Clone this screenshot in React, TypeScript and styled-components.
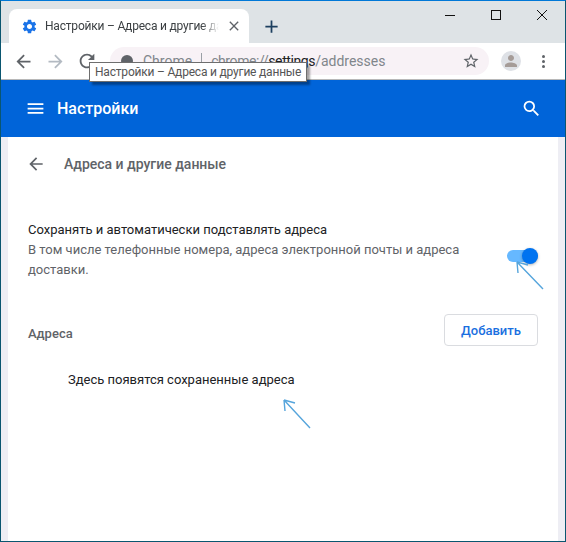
import styled, { createGlobalStyle } from 'styled-components'
import { MdAdd, MdArrowBack, MdArrowForward, MdClose, MdMenu, MdPerson, MdRefresh, MdSearch, MdSettings, MdStarBorder } from 'react-icons/md'

const Global = createGlobalStyle`
  html, body { margin: 0; padding: 0; background: #fff; }
  body { font-family: Roboto, "Liberation Sans", sans-serif; }
`

const Win = styled.div`
  position: relative;
  box-sizing: border-box;
  width: 566px;
  height: 542px;
  display: flex;
  flex-direction: column;
  overflow: hidden;
  border: 1px solid #0a5670;
  border-top-color: #0078d7;
`

const TabStrip = styled.div`
  height: 42px;
  flex: none;
  display: flex;
  align-items: flex-end;
  padding-left: 8px;
  background: #dee3e6;
`

const Tab = styled.div`
  box-sizing: border-box;
  width: 240px;
  height: 34px;
  display: flex;
  align-items: center;
  gap: 7px;
  padding: 0 7px 0 12px;
  background: #fff;
  border-radius: 8px 8px 0 0;
  color: #3c4043;
  font-size: 12px;
`

const TabTitle = styled.span`
  flex: 1;
  overflow: hidden;
  white-space: nowrap;
  letter-spacing: -0.2px;
  -webkit-mask-image: linear-gradient(90deg, #000 90%, transparent);
  mask-image: linear-gradient(90deg, #000 90%, transparent);
`

const NewTab = styled.div`
  width: 28px;
  height: 34px;
  margin-left: 8px;
  display: flex;
  align-items: center;
  justify-content: center;
  color: #1c3f5f;
`

const Controls = styled.div`
  margin-left: auto;
  align-self: flex-start;
  display: flex;
  color: #111;
`

const Control = styled.div`
  width: 46px;
  height: 28px;
  display: flex;
  align-items: center;
  justify-content: center;
`

const Toolbar = styled.div`
  box-sizing: border-box;
  height: 37px;
  flex: none;
  display: flex;
  align-items: center;
  padding-left: 6px;
  background: #fff;
  border-bottom: 1px solid #b8b8b8;
`

const NavBtn = styled.div<{ $dim?: boolean }>`
  width: 32px;
  height: 24px;
  display: flex;
  align-items: center;
  justify-content: center;
  color: ${p => (p.$dim ? '#b3bac2' : '#5f6368')};
`

const Omnibox = styled.div`
  box-sizing: border-box;
  width: 379px;
  height: 28px;
  margin-left: 7px;
  display: flex;
  align-items: center;
  padding: 0 9px 0 11px;
  background: #f8f2f6;
  border-radius: 14px;
  font-size: 14px;
  color: #80868b;
`

const SiteIcon = styled.span`
  width: 12px;
  height: 12px;
  margin-right: 10px;
  border-radius: 50%;
  background: #5f6368;
`

const Divider = styled.span`
  width: 1px;
  height: 16px;
  margin: 0 9px;
  background: #9aa0a6;
`

const UrlHost = styled.span`
  letter-spacing: -0.4px;
`

const UrlDark = styled.span`
  color: #202124;
`

const UrlGap = styled.span`
  flex: 1;
`

const Avatar = styled.div`
  width: 20px;
  height: 20px;
  margin-left: 12px;
  border-radius: 50%;
  background: #dee1e6;
  display: flex;
  align-items: center;
  justify-content: center;
  color: #a59c98;
`

const Dots = styled.div`
  margin-left: 21px;
  display: flex;
  flex-direction: column;
  gap: 2px;
  span {
    width: 3px;
    height: 3px;
    border-radius: 50%;
    background: #5f6368;
  }
`

const Tip = styled.div`
  position: absolute;
  left: 88px;
  top: 61px;
  box-sizing: border-box;
  width: 218px;
  height: 20px;
  padding-left: 5px;
  background: #fff;
  border: 1px solid #6e6e6e;
  box-shadow: 3px 3px 2px rgba(0, 0, 0, 0.35);
  font-size: 12px;
  line-height: 18px;
  letter-spacing: -0.2px;
  color: #555;
  white-space: nowrap;
`

const Header = styled.header`
  height: 57px;
  flex: none;
  display: flex;
  align-items: center;
  padding: 0 23px 0 24px;
  background: #0064d9;
  color: #fff;
`

const HeaderTitle = styled.h1`
  margin: 0 0 0 11px;
  font-size: 16px;
  font-weight: 500;
  flex: 1;
`

const Page = styled.div`
  flex: 1;
  background: #eeeef4;
  padding: 0 7px;
  display: flex;
`

const Card = styled.main`
  box-sizing: border-box;
  flex: 1;
  background: #fff;
  padding: 0 20px;
  font-size: 13px;
`

const SubHead = styled.div`
  height: 54px;
  display: flex;
  align-items: center;
  gap: 18px;
  margin-left: -2px;
  color: #5f6368;
  font-size: 14px;
  font-weight: 500;
`

const ToggleRow = styled.section`
  margin-top: 29px;
  display: flex;
  align-items: center;
  justify-content: space-between;
  line-height: 20px;
  color: #202124;
`

const Hint = styled.div`
  width: 440px;
  color: #5f6368;
`

const Switch = styled.div`
  position: relative;
  width: 31px;
  height: 12px;
  margin-top: 11px;
  border-radius: 6px;
  background: #66b8ff;
  flex: none;
  &::after {
    content: '';
    position: absolute;
    right: 0;
    top: -2px;
    width: 16px;
    height: 16px;
    border-radius: 50%;
    background: #0073f0;
    box-shadow: 0 1px 3px rgba(0, 0, 0, 0.3);
  }
`

const ListHead = styled.div`
  margin-top: 34px;
  display: flex;
  align-items: center;
  justify-content: space-between;
  color: #5f6368;
  font-weight: 500;
`

const ListLabel = styled.span`
  padding-top: 6px;
`

const AddBtn = styled.button`
  box-sizing: border-box;
  width: 94px;
  height: 32px;
  background: #fff;
  border: 1px solid #dadce0;
  border-radius: 4px;
  color: #1a6fe0;
  font: 500 13px Roboto, sans-serif;
`

const Empty = styled.div`
  margin: 26px 0 0 40px;
  line-height: 16px;
  color: #202124;
`

const Pointer = styled.svg`
  position: absolute;
  left: -1px;
  top: -1px;
  pointer-events: none;
`

export default function App() {
  return (
    <Win>
      <Global />
      <TabStrip>
        <Tab>
          <MdSettings size={17} color="#1a73e8" />
          <TabTitle>Настройки – Адреса и другие данные</TabTitle>
          <MdClose size={16} color="#5f6368" />
        </Tab>
        <NewTab>
          <MdAdd size={21} />
        </NewTab>
        <Controls>
          <Control>
            <svg width="10" height="10" fill="none" stroke="currentColor"><path d="M0 5.5H10" /></svg>
          </Control>
          <Control>
            <svg width="10" height="10" fill="none" stroke="currentColor"><rect x="0.5" y="0.5" width="9" height="9" /></svg>
          </Control>
          <Control>
            <svg width="10" height="10" fill="none" stroke="currentColor"><path d="M0 0L10 10M10 0L0 10" /></svg>
          </Control>
        </Controls>
      </TabStrip>
      <Toolbar>
        <NavBtn><MdArrowBack size={21} /></NavBtn>
        <NavBtn $dim><MdArrowForward size={21} /></NavBtn>
        <NavBtn><MdRefresh size={22} /></NavBtn>
        <Omnibox>
          <SiteIcon />
          Chrome
          <Divider />
          <UrlHost>chrome://<UrlDark>settings</UrlDark></UrlHost>/addresses
          <UrlGap />
          <MdStarBorder size={18} color="#5f6368" />
        </Omnibox>
        <Avatar><MdPerson size={18} /></Avatar>
        <Dots><span /><span /><span /></Dots>
      </Toolbar>
      <Tip>Настройки – Адреса и другие данные</Tip>
      <Header>
        <MdMenu size={21} />
        <HeaderTitle>Настройки</HeaderTitle>
        <MdSearch size={21} />
      </Header>
      <Page>
        <Card>
          <SubHead>
            <MdArrowBack size={20} />
            Адреса и другие данные
          </SubHead>
          <ToggleRow>
            <div>
              Сохранять и автоматически подставлять адреса
              <Hint>В том числе телефонные номера, адреса электронной почты и адреса доставки.</Hint>
            </div>
            <Switch />
          </ToggleRow>
          <ListHead>
            <ListLabel>Адреса</ListLabel>
            <AddBtn>Добавить</AddBtn>
          </ListHead>
          <Empty>Здесь появятся сохраненные адреса</Empty>
        </Card>
      </Page>
      <Pointer width="566" height="542" fill="none" stroke="#56a5dc" strokeWidth="1.4">
        <path d="M543 289 L517 262 M517 262 L518 273 M517 262 L528 265" />
        <path d="M310 428 L284 400 M284 400 L285 411 M284 400 L295 403" />
      </Pointer>
    </Win>
  )
}
